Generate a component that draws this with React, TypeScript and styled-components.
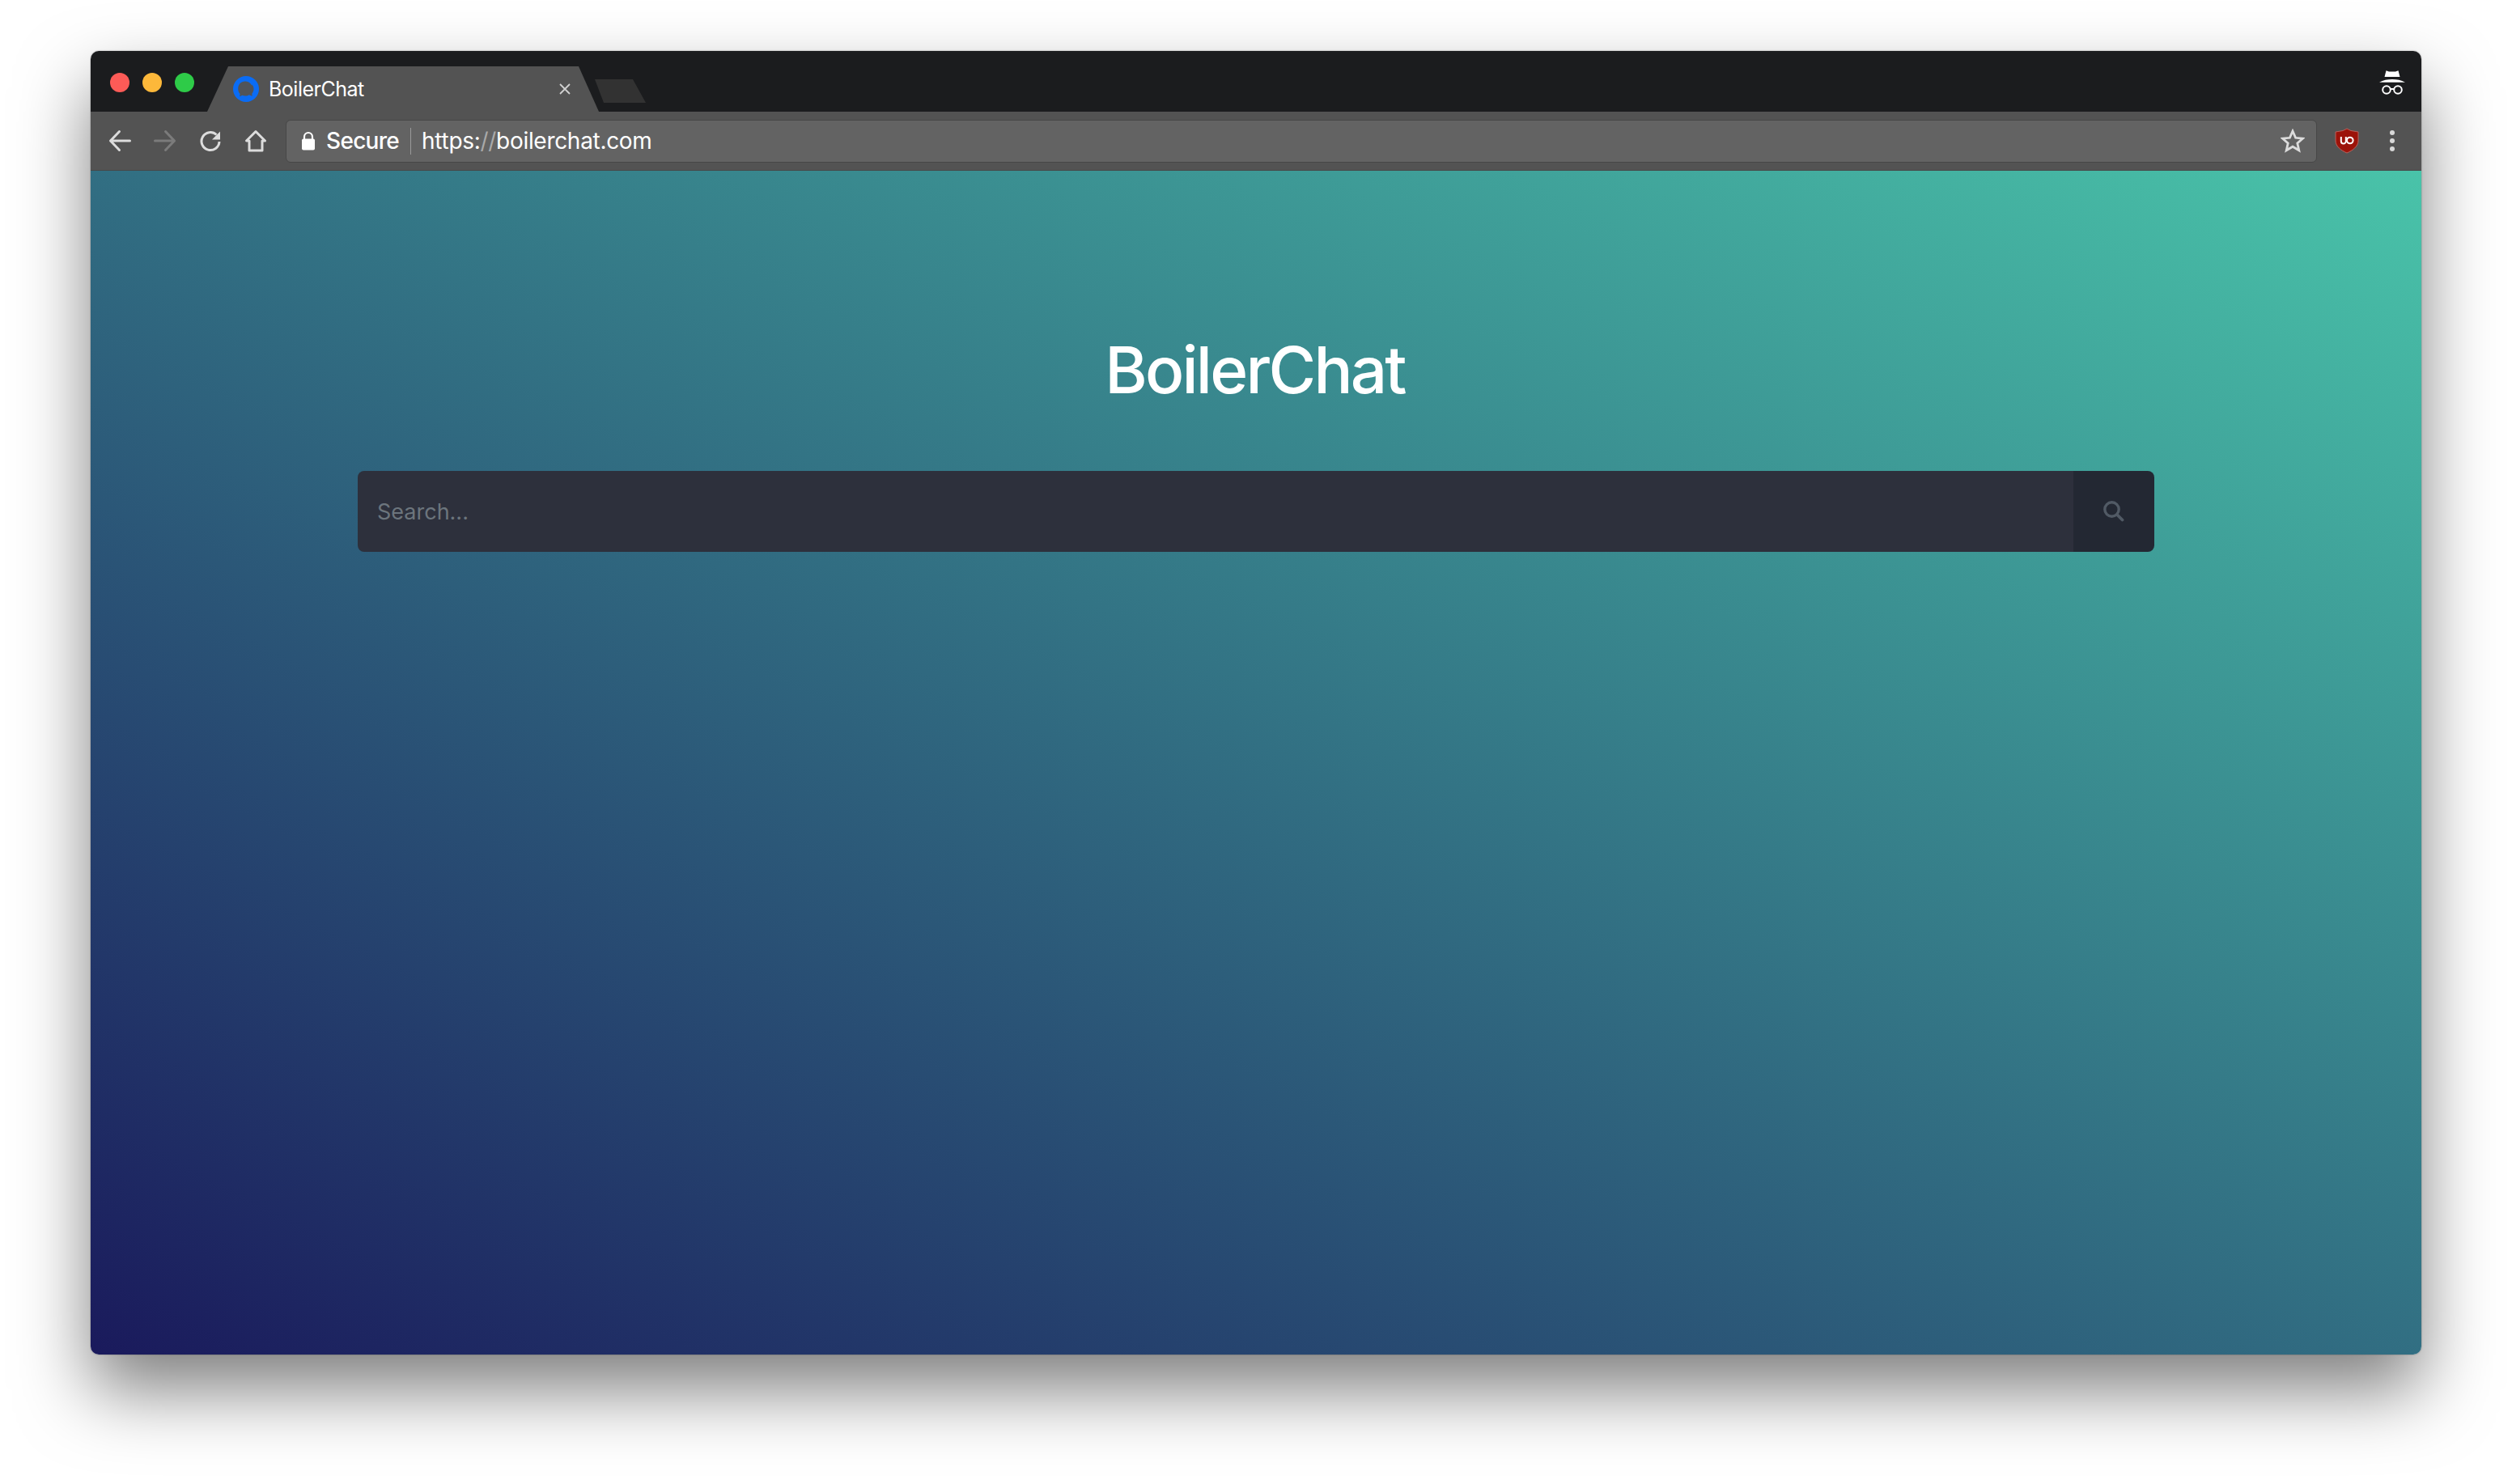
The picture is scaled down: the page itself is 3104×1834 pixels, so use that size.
import React from 'react';
import styled, { createGlobalStyle } from 'styled-components';

const GlobalStyle = createGlobalStyle`
  html, body {
    margin: 0;
    padding: 0;
    background: #fff;
  }
  body {
    font-family: Inter, "Liberation Sans", sans-serif;
  }
`;

const Page = styled.div`
  width: 3104px;
  height: 1834px;
  box-sizing: border-box;
  padding: 63px 112px 160px;
  overflow: hidden;
`;

const BrowserWindow = styled.div`
  height: 100%;
  display: flex;
  flex-direction: column;
  border-radius: 10px;
  overflow: hidden;
  box-shadow: 0 44px 88px rgba(0, 0, 0, 0.5), 0 0 2px rgba(0, 0, 0, 0.4);
`;

const TabStrip = styled.div`
  height: 75px;
  flex: none;
  display: flex;
  align-items: flex-end;
  background: #1b1c1e;
`;

const Lights = styled.div`
  display: flex;
  gap: 16px;
  padding: 0 0 24px 24px;
`;

const Light = styled.span<{ $color: string }>`
  width: 24px;
  height: 24px;
  border-radius: 50%;
  background: ${(p) => p.$color};
`;

const Tab = styled.div`
  width: 484px;
  height: 56px;
  margin-left: 16px;
  box-sizing: border-box;
  padding: 0 35px 0 32px;
  display: flex;
  align-items: center;
  gap: 12px;
  background: #535353;
  color: #fff;
  font-size: 25px;
  clip-path: polygon(0 100%, 26px 0, 459px 0, 100% 100%);
`;

const TabTitle = styled.span`
  flex: 1;
  letter-spacing: -0.5px;
`;

const NewTab = styled.div`
  width: 63px;
  height: 29px;
  margin: 0 0 11px -5px;
  background: #323232;
  clip-path: polygon(0 0, 47px 0, 100% 100%, 11px 100%);
`;

const IncognitoSlot = styled.div`
  margin-left: auto;
  padding: 0 19px 20px 0;
  display: flex;
`;

const Toolbar = styled.div`
  height: 73px;
  flex: none;
  box-sizing: border-box;
  display: flex;
  align-items: center;
  padding-left: 8px;
  background: #535353;
  border-bottom: 1px solid #474747;
`;

const NavButton = styled.button`
  width: 56px;
  height: 40px;
  padding: 0;
  border: 0;
  display: flex;
  align-items: center;
  justify-content: center;
  background: none;
`;

const Omnibox = styled.div`
  flex: 1;
  height: 53px;
  margin: 0 0 0 9px;
  box-sizing: border-box;
  display: flex;
  align-items: center;
  padding: 0 14px 0 18px;
  background: #636363;
  border: 1px solid #474747;
  border-radius: 6px;
  color: #fff;
  font-size: 28px;
`;

const SecureLabel = styled.span`
  margin-left: 13px;
  padding-right: 14px;
  border-right: 1px solid #9a9a9a;
  font-weight: 500;
  line-height: 33px;
  letter-spacing: -0.7px;
`;

const Url = styled.span`
  margin-left: 13px;
  letter-spacing: -0.3px;
  flex: 1;
`;

const UrlSlashes = styled.span`
  color: #a9a9a9;
`;

const ToolbarEnd = styled.div`
  width: 129px;
  flex: none;
  display: flex;
  align-items: center;
  justify-content: flex-start;
  padding-left: 22px;
  gap: 37px;
  box-sizing: border-box;
`;

const Content = styled.main`
  flex: 1;
  display: flex;
  flex-direction: column;
  align-items: center;
  padding-top: 198px;
  background: linear-gradient(to top right, #1a1a5c, #49c3a9);
`;

const Title = styled.h1`
  margin: 0 0 77px;
  padding-right: 3px;
  color: #fff;
  font-size: 80px;
  font-weight: 500;
  line-height: 96px;
  letter-spacing: -2.8px;
`;

const SearchBar = styled.form`
  width: 2220px;
  height: 100px;
  display: flex;
  border-radius: 8px;
  overflow: hidden;
`;

const SearchInput = styled.input`
  flex: 1;
  min-width: 0;
  box-sizing: border-box;
  padding: 0 24px;
  border: 0;
  outline: 0;
  background: #2d303c;
  color: #fff;
  font-family: inherit;
  font-size: 27px;

  &::placeholder {
    color: #6c757d;
    opacity: 1;
  }
`;

const SearchButton = styled.button`
  width: 100px;
  flex: none;
  border: 0;
  padding: 0;
  display: flex;
  align-items: center;
  justify-content: center;
  background: #232833;
`;

const Favicon = () => (
  <svg width="32" height="32" viewBox="0 0 32 32" style={{ flex: 'none' }}>
    <circle cx="16" cy="16" r="16" fill="#0a6cf5" />
    <path d="M15 6.500c-5.200 0-8.800 3.900-8.800 9.200 0 2.500.9 4.700 2.400 6.300l-.5 3.300 3.400-1.500c1.100.5 2.300.7 3.500.7 5.200 0 8.900-3.700 8.900-8.800s-3.700-9.200-8.900-9.200z" fill="#50545a" />
    <path d="M23.500 10.500c1.300 1.600 2 3.500 2 5.600 0 2.200-.8 4.200-2.200 5.800l.4 2.800-3.600-1.300" fill="#50545a" />
  </svg>
);

const CloseIcon = () => (
  <svg width="14" height="14" viewBox="0 0 14 14" style={{ flex: 'none' }}>
    <path d="M1 1l12 12M13 1L1 13" stroke="#d0d0d0" strokeWidth="1.800" />
  </svg>
);

const ArrowIcon = ({ dir, color }: { dir: 'left' | 'right'; color: string }) => (
  <svg width="28" height="28" viewBox="0 0 28 28" style={{ transform: dir === 'right' ? 'scaleX(-1)' : undefined }}>
    <path d="M13.500 2.500L2.500 14l11 11.500M2.500 14H26.500" fill="none" stroke={color} strokeWidth="3" strokeLinecap="round" strokeLinejoin="round" />
  </svg>
);

const ReloadIcon = () => (
  <svg width="28" height="28" viewBox="0 0 28 28">
    <path d="M21.500 6.500A11 11 0 1 0 25 15" fill="none" stroke="#dcdcdc" strokeWidth="3" />
    <path d="M26 2.500V12.500H16z" fill="#dcdcdc" />
  </svg>
);

const HomeIcon = () => (
  <svg width="28" height="28" viewBox="0 0 28 28">
    <path d="M14 2.500L2.500 14H6V26H22V14H25.500z" fill="none" stroke="#dcdcdc" strokeWidth="3" strokeLinejoin="round" />
  </svg>
);

const LockIcon = () => (
  <svg width="18" height="24" viewBox="0 0 18 24" style={{ flex: 'none' }}>
    <path d="M4 10V7a5 5 0 0 1 10 0v3" fill="none" stroke="#fff" strokeWidth="2.200" />
    <rect x="1" y="9.500" width="16" height="14" rx="2" fill="#fff" />
  </svg>
);

const StarIcon = () => (
  <svg width="30" height="30" viewBox="0 0 30 30" style={{ flex: 'none' }}>
    <path d="M15 3l3.600 8.300 9 .8-6.800 5.900 2 8.800-7.800-4.600-7.800 4.600 2-8.800-6.800-5.900 9-.8z" fill="none" stroke="#dcdcdc" strokeWidth="2.800" />
  </svg>
);

const UBlockIcon = () => (
  <svg width="30" height="32" viewBox="0 0 30 32" style={{ flex: 'none' }}>
    <path d="M15 1l5 2.500 9 1.500v11c0 7-7 12-14 15C8 28 1 23 1 16V5l9-1.500z" fill="#9c130a" stroke="#b9625c" strokeWidth="1" />
    <path d="M7.800 11v5.500a3 3 0 0 0 6 0V11" fill="none" stroke="#fff" strokeWidth="2" />
    <circle cx="18.800" cy="15.500" r="3.800" fill="none" stroke="#fff" strokeWidth="2" />
  </svg>
);

const MenuIcon = () => (
  <svg width="8" height="28" viewBox="0 0 8 28" style={{ flex: 'none' }}>
    <circle cx="4" cy="4" r="3" fill="#d8d8d8" />
    <circle cx="4" cy="14" r="3" fill="#d8d8d8" />
    <circle cx="4" cy="24" r="3" fill="#d8d8d8" />
  </svg>
);

const IncognitoIcon = () => (
  <svg width="34" height="32" viewBox="0 0 34 32">
    <path d="M9.500 1.300l3.500 1.200h8l3.500-1.200 2 7.700h-19z" fill="#fff" />
    <path d="M1 15.800c5-2.800 10-3.800 16-3.800s11 1 16 3.800z" fill="#fff" />
    <circle cx="10" cy="25" r="4.800" fill="none" stroke="#fff" strokeWidth="2" />
    <circle cx="24" cy="25" r="4.800" fill="none" stroke="#fff" strokeWidth="2" />
    <path d="M14 24h6" stroke="#fff" strokeWidth="2" />
  </svg>
);

const SearchIcon = () => (
  <svg width="26" height="26" viewBox="0 0 26 26">
    <circle cx="10.500" cy="10.500" r="8.700" fill="none" stroke="#515a65" strokeWidth="3.400" />
    <path d="M17 17L23.500 23.500" stroke="#515a65" strokeWidth="3.800" strokeLinecap="round" />
  </svg>
);

const App: React.FC = () => {
  return (
    <Page>
      <GlobalStyle />
      <BrowserWindow>
        <TabStrip>
          <Lights>
            <Light $color="#fc5b57" />
            <Light $color="#fdb83a" />
            <Light $color="#2ecb48" />
          </Lights>
          <Tab>
            <Favicon />
            <TabTitle>BoilerChat</TabTitle>
            <CloseIcon />
          </Tab>
          <NewTab />
          <IncognitoSlot>
            <IncognitoIcon />
          </IncognitoSlot>
        </TabStrip>
        <Toolbar>
          <NavButton aria-label="Back">
            <ArrowIcon dir="left" color="#dcdcdc" />
          </NavButton>
          <NavButton aria-label="Forward">
            <ArrowIcon dir="right" color="#7b7b7b" />
          </NavButton>
          <NavButton aria-label="Reload">
            <ReloadIcon />
          </NavButton>
          <NavButton aria-label="Home">
            <HomeIcon />
          </NavButton>
          <Omnibox>
            <LockIcon />
            <SecureLabel>Secure</SecureLabel>
            <Url>
              https:<UrlSlashes>//</UrlSlashes>boilerchat.com
            </Url>
            <StarIcon />
          </Omnibox>
          <ToolbarEnd>
            <UBlockIcon />
            <MenuIcon />
          </ToolbarEnd>
        </Toolbar>
        <Content>
          <Title>BoilerChat</Title>
          <SearchBar>
            <SearchInput placeholder="Search..." />
            <SearchButton type="button" aria-label="Search">
              <SearchIcon />
            </SearchButton>
          </SearchBar>
        </Content>
      </BrowserWindow>
    </Page>
  );
};

export default App;
